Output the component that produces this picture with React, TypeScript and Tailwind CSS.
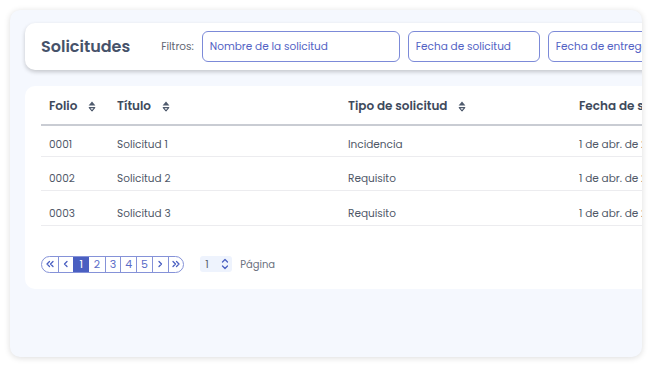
import React from 'react';

const font = { fontFamily: 'Poppins, Inter, "Noto Sans", sans-serif' };

const SortIcon = () => (
  <svg width="8" height="11" viewBox="0 0 8 11" className="ml-[11px] inline-block">
    <path d="M4 0.6 L7.4 4.4 H0.6 Z" fill="#4f5a6d" />
    <path d="M1.2 6.6 H6.8 L4 9.9 Z" fill="none" stroke="#4f5a6d" strokeWidth="1.1" strokeLinejoin="round" />
  </svg>
);

const rows = [
  { folio: '0001', titulo: 'Solicitud 1', tipo: 'Incidencia', fecha: '1 de abr. de 2024', h: 'h-[31px]', pt: 'pt-[8px]' },
  { folio: '0002', titulo: 'Solicitud 2', tipo: 'Requisito', fecha: '1 de abr. de 2024', h: 'h-[34px]', pt: 'pt-[12px]' },
  { folio: '0003', titulo: 'Solicitud 3', tipo: 'Requisito', fecha: '1 de abr. de 2024', h: 'h-[35px]', pt: 'pt-[12px]' },
];

const Chev = ({ d }: { d: string }) => (
  <svg width="10" height="10" viewBox="0 0 10 10">
    <path d={d} fill="none" stroke="#4a5fc1" strokeWidth="1.3" strokeLinecap="round" strokeLinejoin="round" />
  </svg>
);

const Pagination = () => {
  const cell = 'flex h-[16px] w-[15.7px] items-center justify-center border-l border-[#8592d8] text-[11px] text-[#5a6bc7]';
  return (
    <div className="flex h-[17px] items-center overflow-hidden rounded-full border border-[#8592d8]">
      <div className="flex h-[16px] w-[15.7px] items-center justify-center">
        <Chev d="M4.5 2.5 L2 5 L4.5 7.5 M8 2.5 L5.5 5 L8 7.5" />
      </div>
      <div className={cell}>
        <Chev d="M6 2.5 L3.5 5 L6 7.5" />
      </div>
      <div className="flex h-[16px] w-[15.7px] items-center justify-center bg-[#4a5fc1] text-[11px] text-white">1</div>
      {['2', '3', '4', '5'].map((n, i) => (
        <div
          key={n}
          className={i === 0 ? 'flex h-[16px] w-[15.7px] items-center justify-center text-[11px] text-[#5a6bc7]' : cell}
        >
          {n}
        </div>
      ))}
      <div className={cell}>
        <Chev d="M4 2.5 L6.5 5 L4 7.5" />
      </div>
      <div className={cell}>
        <Chev d="M2 2.5 L4.5 5 L2 7.5 M5.5 2.5 L8 5 L5.5 7.5" />
      </div>
    </div>
  );
};

export default function App() {
  return (
    <div className="h-[367px] w-[652px] bg-white p-[10px]" style={font}>
      <div className="h-[347px] w-[632px] overflow-hidden rounded-[10px] bg-[#f5f8fe] pl-[15px] pt-[13px] shadow-[0_1px_6px_rgba(0,0,0,0.14)]">
        <div className="flex h-[47px] w-[700px] items-center rounded-[10px] bg-white pl-[16px] shadow-[0_2px_4px_rgba(0,0,0,0.2)]">
          <h1 className="text-[16px] font-semibold text-[#46526a]">Solicitudes</h1>
          <span className="ml-[31px] text-[10.5px] text-[#5f6672]">Filtros:</span>
          <div className="ml-[8px] flex h-[31px] w-[198px] shrink-0 items-center rounded-[6px] border border-[#7c8ad8] px-[7px] text-[10.5px] text-[#5262c4]">
            Nombre de la solicitud
          </div>
          <div className="ml-[8px] flex h-[31px] w-[132px] shrink-0 items-center rounded-[6px] border border-[#7c8ad8] px-[7px] text-[10.5px] text-[#5262c4]">
            Fecha de solicitud
          </div>
          <div className="ml-[8px] flex h-[31px] w-[132px] shrink-0 items-center whitespace-nowrap rounded-[6px] border border-[#7c8ad8] px-[7px] text-[10.5px] text-[#5262c4]">
            Fecha de entrega
          </div>
        </div>

        <div className="mt-[16px] h-[203px] w-[700px] rounded-[10px] bg-white px-[16px] pt-[2px]">
          <table className="w-[680px] table-fixed border-collapse">
            <colgroup>
              <col className="w-[68px]" />
              <col className="w-[231px]" />
              <col className="w-[231px]" />
              <col className="w-[150px]" />
            </colgroup>
            <thead>
              <tr className="h-[37px] border-b-2 border-[#c9ccd3] text-left text-[12px] font-semibold text-[#3e4a5c]">
                <th className="pl-[8px] font-semibold whitespace-nowrap">
                  Folio
                  <SortIcon />
                </th>
                <th className="pl-[8px] font-semibold whitespace-nowrap">
                  Título
                  <SortIcon />
                </th>
                <th className="pl-[8px] font-semibold whitespace-nowrap">
                  Tipo de solicitud
                  <SortIcon />
                </th>
                <th className="pl-[8px] font-semibold whitespace-nowrap">Fecha de solicitud</th>
              </tr>
            </thead>
            <tbody>
              {rows.map((r) => (
                <tr key={r.folio} className={`${r.h} border-b border-[#ececef] text-[10.5px] text-[#4f5868]`}>
                  <td className={`pl-[8px] ${r.pt}`}>{r.folio}</td>
                  <td className={`pl-[8px] ${r.pt}`}>{r.titulo}</td>
                  <td className={`pl-[8px] ${r.pt}`}>{r.tipo}</td>
                  <td className={`pl-[8px] ${r.pt} whitespace-nowrap`}>{r.fecha}</td>
                </tr>
              ))}
            </tbody>
          </table>

          <div className="mt-[30px] flex items-center">
            <Pagination />
            <div className="ml-[16px] flex h-[16px] w-[32px] items-center justify-between rounded-[3px] bg-[#eef3fd] pl-[5px] pr-[3px] text-[11px] text-[#5f6672]">
              <span>1</span>
              <svg width="8" height="12" viewBox="0 0 8 12">
                <path
                  d="M1.5 4 L4 1.5 L6.5 4 M1.5 8 L4 10.5 L6.5 8"
                  fill="none"
                  stroke="#4a5fc1"
                  strokeWidth="1.3"
                  strokeLinecap="round"
                  strokeLinejoin="round"
                />
              </svg>
            </div>
            <span className="ml-[8px] text-[10px] text-[#6b7280]">Página</span>
          </div>
        </div>
      </div>
    </div>
  );
}
